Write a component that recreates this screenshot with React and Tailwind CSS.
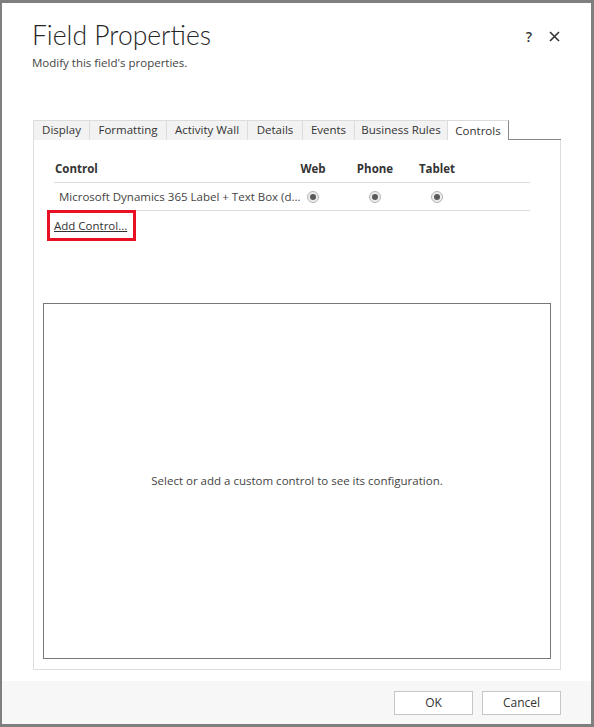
import { useState } from 'react';

const tabs = ['Display', 'Formatting', 'Activity Wall', 'Details', 'Events', 'Business Rules', 'Controls'];
const tabWidths = ['w-[56px]', 'w-[77px]', 'w-[81px]', 'w-[55px]', 'w-[52px]', 'w-[93px]', 'w-[62px]'];

function Radio() {
  return (
    <div className="w-[12px] h-[12px] rounded-full border border-[#b5b5b5] bg-[#ececec] flex items-center justify-center">
      <div className="w-[6px] h-[6px] rounded-full bg-[#5a5a5a]" />
    </div>
  );
}

export default function App() {
  const [active] = useState('Controls');

  return (
    <div
      className="w-[594px] h-[727px] bg-white border-t-[3px] border-l-2 border-r-[3px] border-b-[3px] border-[#7f7f7f] flex flex-col text-[#333] text-[11.5px]"
      style={{ fontFamily: '"Open Sans", "Noto Sans", sans-serif' }}
    >
      <div className="flex items-start justify-between pl-[30px] pr-[31px] pt-[14px]">
        <div>
          <h1
            className="text-[26.5px] leading-[36px] font-light text-[#262626]"
            style={{ fontFamily: 'Lato, "Open Sans", sans-serif' }}
          >
            Field Properties
          </h1>
          <p className="leading-[16px] text-[#444] mt-[2px]">Modify this field's properties.</p>
        </div>
        <div className="flex items-center gap-[17px] pt-[9px]">
          <span className="text-[14px] font-semibold text-[#333]">?</span>
          <svg width="11" height="11" viewBox="0 0 11 11">
            <path d="M1 1 L10 10 M10 1 L1 10" stroke="#333" strokeWidth="1.6" />
          </svg>
        </div>
      </div>

      <div className="mt-[49px] ml-[31px] mr-[30px] flex items-end">
        {tabs.map((t, i) => (
          <div
            key={t}
            className={
              t === active
                ? `${tabWidths[i]} h-[20px] bg-white border border-b-0 border-l-[#dcdcdc] border-t-[#dcdcdc] border-r-[#888] text-[#333] flex items-center justify-center whitespace-nowrap`
                : `${tabWidths[i]} h-[20px] bg-[#f2f2f2] border-l border-t border-[#dcdcdc] border-b border-b-[#f2f2f2] text-[#333] flex items-center justify-center whitespace-nowrap`
            }
          >
            {t}
          </div>
        ))}
        <div className="flex-1 h-[20px] border-b border-[#888]" />
      </div>

      <div className="ml-[31px] mr-[30px] flex-1 border-l border-r border-b border-[#dedede] flex flex-col">
        <div className="pt-[15px] pl-[20px] pr-[30px]">
          <div className="grid grid-cols-[228px_62px_62px_62px_1fr] border-b border-[#dcdcdc] h-[28px] items-center font-bold text-[#333]">
            <div className="pl-[1px]">Control</div>
            <div className="text-center">Web</div>
            <div className="text-center">Phone</div>
            <div className="text-center">Tablet</div>
            <div />
          </div>
          <div className="grid grid-cols-[228px_62px_62px_62px_1fr] border-b border-[#dcdcdc] h-[28px] items-center text-[#444]">
            <div className="pl-[5px] whitespace-nowrap">Microsoft Dynamics 365 Label + Text Box (d...</div>
            <div className="flex justify-center"><Radio /></div>
            <div className="flex justify-center"><Radio /></div>
            <div className="flex justify-center"><Radio /></div>
            <div />
          </div>
          <div className="ml-[-7px] mt-[-1px] w-[89px] h-[31px] border-[3px] border-[#e81123] flex items-center pl-[4px]">
            <span className="underline text-[#333]">Add Control...</span>
          </div>
        </div>

        <div className="mx-[9px] mt-[62px] mb-[10px] flex-1 border border-[#777] flex items-center justify-center">
          <span className="text-[#444]">Select or add a custom control to see its configuration.</span>
        </div>
      </div>

      <div className="h-[11px]" />
      <div className="h-[43px] bg-[#f7f7f7] flex items-start justify-end gap-[9px] pr-[30px] pt-[10px]">
        <button className="w-[79px] h-[24px] bg-white border border-[#c6c6c6] text-[12px] text-[#333]">OK</button>
        <button className="w-[79px] h-[24px] bg-white border border-[#c6c6c6] text-[12px] text-[#333]">Cancel</button>
      </div>
    </div>
  );
}
